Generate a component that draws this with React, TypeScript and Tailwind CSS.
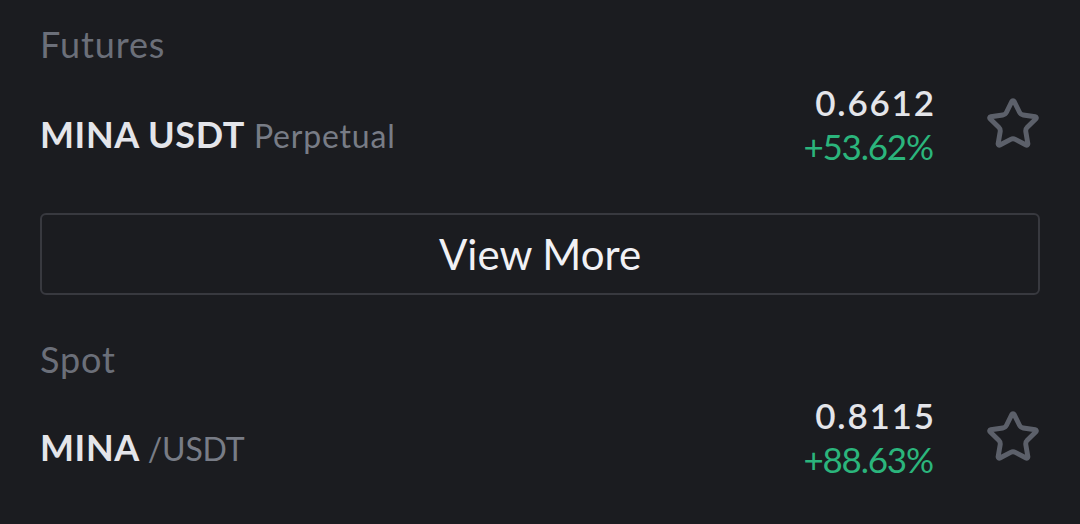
import { Star } from "lucide-react";

interface Market {
  base: string;
  quote: string;
  price: string;
  change: string;
}

function MarketRow({ market, gap, quoteClass }: { market: Market; gap: string; quoteClass: string }) {
  return (
    <div className={`flex items-end justify-between ${gap}`}>
      {/* Pair name */}
      <div className="pb-[4px] leading-[44px] whitespace-nowrap">
        <span className="text-[36px] font-bold tracking-[0.6px] text-[#e4e5ea]">{market.base}</span>
        <span className={`text-[32px] text-[#787c86] ${quoteClass}`}>{market.quote}</span>
      </div>
      <div className="flex items-center gap-[51px] mr-[-1px]">
        <div className="flex flex-col items-end">
          <span className="text-[35px] font-semibold tracking-[1.8px] mr-[-1.8px] leading-[44px] text-[#e4e5ea]">
            {market.price}
          </span>
          <span className="text-[35px] tracking-[-1.2px] mr-[1.2px] leading-[44px] text-[#2bb57c]">
            {market.change}
          </span>
        </div>
        <Star className="w-14 h-14 text-[#5c606a]" strokeWidth={2.1} />
      </div>
    </div>
  );
}

export default function App() {
  return (
    <div
      className="w-[1080px] h-[524px] overflow-hidden bg-[#1b1c20] px-10 pt-[26px]"
      style={{ fontFamily: "Lato, 'Open Sans', sans-serif" }}
    >
      <div className="text-[36px] leading-[36px] tracking-[0.9px] text-[#6b6f79]">Futures</div>
      <MarketRow
        gap="mt-[18px]"
        quoteClass="tracking-[0.8px]"
        market={{ base: "MINA USDT", quote: " Perpetual", price: "0.6612", change: "+53.62%" }}
      />

      <button className="mt-[45px] flex h-[82px] w-full items-center justify-center rounded-[6px] border-2 border-[#38393f] text-[42px] text-[#f1f1f5]">
        View More
      </button>

      <div className="mt-[46px] text-[36px] leading-[36px] tracking-[0.9px] text-[#6b6f79]">Spot</div>
      <MarketRow
        gap="mt-[16px]"
        quoteClass="tracking-[-0.2px]"
        market={{ base: "MINA", quote: " /USDT", price: "0.8115", change: "+88.63%" }}
      />
    </div>
  );
}
